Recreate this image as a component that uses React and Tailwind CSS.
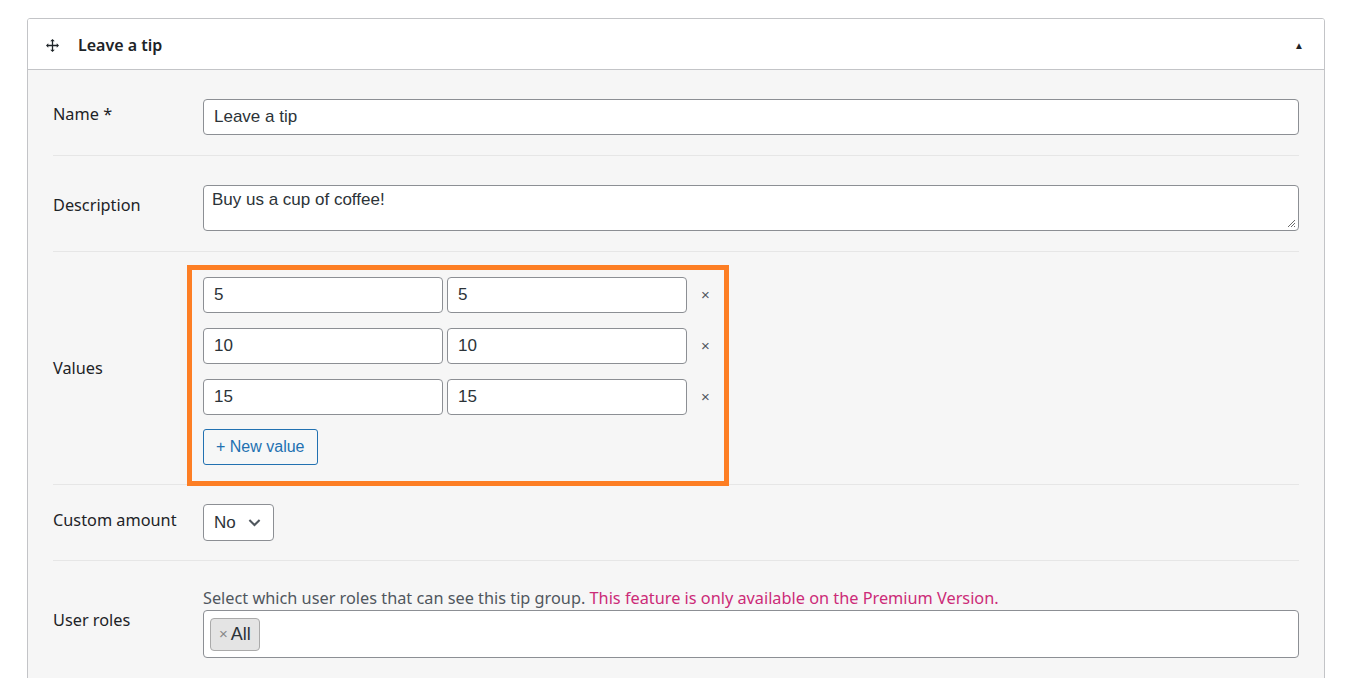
import React from 'react';

const ui = { fontFamily: '"Noto Sans", "Open Sans", sans-serif' };
const field = { fontFamily: '"Liberation Sans", Arial, sans-serif' };

const MoveIcon = () => (
  <svg width="13" height="13" viewBox="0 0 20 20" className="text-[#1d2327]" fill="currentColor">
    <path d="M10 0l3.5 3.5h-2.5v5.5h5.5v-2.5l3.5 3.5-3.5 3.5v-2.5h-5.5v5.5h2.5l-3.5 3.5-3.5-3.5h2.5v-5.5h-5.5v2.5l-3.5-3.5 3.5-3.5v2.5h5.5v-5.5h-2.5z" />
  </svg>
);

const Row = ({ label, children, last = false, className = '' }) => (
  <div className={`grid grid-cols-[150px_1fr] items-center ${last ? '' : 'border-b border-[#e6e6e6]'} ${className}`}>
    <div className="text-[16.3px] text-[#1d2327] -mt-[5px]" style={ui}>{label}</div>
    <div>{children}</div>
  </div>
);

const TextInput = ({ value, className = '' }) => (
  <div
    className={`h-[36px] flex items-center px-[10px] bg-white border border-[#8c8f94] rounded-[4px] text-[17px] text-[#2c3338] ${className}`}
    style={field}
  >
    {value}
  </div>
);

export default function App() {
  const values = ['5', '10', '15'];

  return (
    <div className="min-h-[678px] bg-white pt-[18px] pl-[27px] pr-[21px]">
      <div className="border border-[#c3c4c7] rounded-t-[3px] overflow-hidden">
        {/* Header */}
        <div className="h-[51px] bg-white border-b border-[#c3c4c7] flex items-center pl-[18px] pr-[20px] pt-[2px]" style={ui}>
          <MoveIcon />
          <span className="ml-[19px] text-[16px] font-semibold text-[#1d2327]">Leave a tip</span>
          <span className="ml-auto text-[10px] text-[#1d2327]">▲</span>
        </div>

        {/* Body */}
        <div className="bg-[#f6f6f6] px-[25px] pb-[20px]">
          <Row label="Name *" className="pt-[29px] pb-[20px]">
            <TextInput value="Leave a tip" />
          </Row>

          <Row label="Description" className="pt-[29px] pb-[20px]">
            <div
              className="relative h-[46px] bg-white border border-[#8c8f94] rounded-[4px] px-[8px] pt-[1px] text-[17px] text-[#2c3338]"
              style={field}
            >
              Buy us a cup of coffee!
              <svg width="9" height="9" viewBox="0 0 9 9" className="absolute right-[2px] bottom-[2px]">
                <path d="M8 1L1 8M8 4L4 8M8 7L7 8" stroke="#6b6b6b" strokeWidth="1" />
              </svg>
            </div>
          </Row>

          <Row label="Values" className="pt-[25px] pb-[19px]">
            <div className="relative w-fit">
              <div className="flex flex-col gap-[15px]">
                {values.map((v) => (
                  <div key={v} className="flex items-center">
                    <TextInput value={v} className="w-[240px] h-[35px]" />
                    <TextInput value={v} className="w-[240px] h-[35px] ml-[4px]" />
                    <span className="ml-[14px] text-[15px] text-[#50575e]" style={field}>×</span>
                  </div>
                ))}
              </div>
              <button
                className="mt-[14px] h-[36px] px-[12px] border border-[#2271b1] rounded-[3px] bg-[#f6f7f7] text-[#2271b1] text-[16px]"
                style={field}
              >
                + New value
              </button>
              <div className="absolute -left-[16px] -top-[12px] -bottom-[21px] w-[542px] border-[5px] border-[#fd7e24] pointer-events-none" />
            </div>
          </Row>

          <Row label="Custom amount" className="pt-[19px] pb-[19px]">
            <div
              className="w-[71px] h-[37px] bg-white border border-[#8c8f94] rounded-[4px] flex items-center pl-[10px] pr-[10px] text-[17px] text-[#2c3338]"
              style={field}
            >
              No
              <svg width="17" height="17" viewBox="0 0 20 20" className="ml-auto" fill="none" stroke="#50575e" strokeWidth="2.4">
                <path d="M4 7l6 6 6-6" />
              </svg>
            </div>
          </Row>

          <Row label="User roles" last className="pt-[27px]">
            <div className="text-[16.3px] text-[#50575e] leading-[20px] mb-[2px]" style={ui}>
              Select which user roles that can see this tip group.{' '}
              <span className="text-[#cc2b78]">This feature is only available on the Premium Version.</span>
            </div>
            <div className="h-[48px] bg-white border border-[#8c8f94] rounded-[4px] flex items-center pl-[6px]">
              <span
                className="h-[33px] flex items-center px-[8px] bg-[#e4e4e4] border border-[#aaa] rounded-[4px] text-[18px] text-[#2c3338]"
                style={field}
              >
                <span className="text-[#888] text-[15px] mr-[3px]">×</span>All
              </span>
            </div>
          </Row>
        </div>
      </div>
    </div>
  );
}
